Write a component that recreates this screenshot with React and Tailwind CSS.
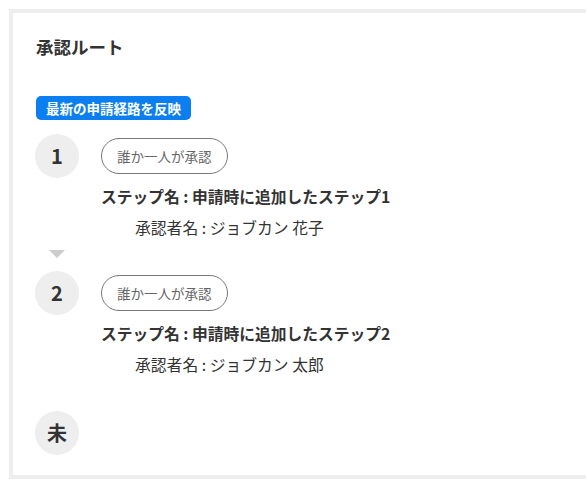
const font = { fontFamily: '"Noto Sans CJK JP", "Noto Sans", sans-serif' }

const steps = [
  { no: '1', name: '申請時に追加したステップ1', approver: 'ジョブカン 花子' },
  { no: '2', name: '申請時に追加したステップ2', approver: 'ジョブカン 太郎' },
]

function Circle({ children }) {
  return (
    <div className="w-[44px] h-[44px] shrink-0 rounded-full bg-[#eeeeee] flex items-center justify-center text-[20px] font-bold text-[#333]">
      {children}
    </div>
  )
}

function Step({ step }) {
  return (
    <div className="flex items-start gap-[22px]">
      <Circle>{step.no}</Circle>
      <div className="mt-[4px]">
        <span className="inline-flex items-center h-[36px] px-[15px] rounded-full border border-[#777] text-[13.5px] text-[#666]">
          誰か一人が承認
        </span>
        <p className="mt-[12px] text-[15.75px] leading-[22px] font-bold text-[#333]">
          ステップ名 : {step.name}
        </p>
        <p className="mt-[10px] pl-[34px] text-[15.8px] leading-[20px] text-[#333]">
          承認者名 : {step.approver}
        </p>
      </div>
    </div>
  )
}

export default function App() {
  return (
    <div className="w-[586px] h-[488px] bg-white pt-[9px] pl-[9px] overflow-hidden" style={font}>
      <div className="h-[470px] border-4 border-r-0 border-[#eeeeee] pl-[23px] pt-[22px]">
        <h2 className="text-[17.5px] leading-[24px] font-bold text-[#333]">承認ルート</h2>
        <span className="inline-flex items-center mt-[37px] h-[24px] px-[10px] rounded-[5px] bg-[#0b7ff0] text-white text-[13.5px] font-bold">
          最新の申請経路を反映
        </span>
        <div className="mt-[14px] -ml-[1px]">
          <Step step={steps[0]} />
          <div className="mt-[12px] ml-[14px] w-0 h-0 border-l-[8px] border-r-[8px] border-t-[8px] border-l-transparent border-r-transparent border-t-[#cccccc]" />
          <div className="mt-[13px]">
            <Step step={steps[1]} />
          </div>
          <div className="mt-[36px]">
            <Circle>未</Circle>
          </div>
        </div>
      </div>
    </div>
  )
}
